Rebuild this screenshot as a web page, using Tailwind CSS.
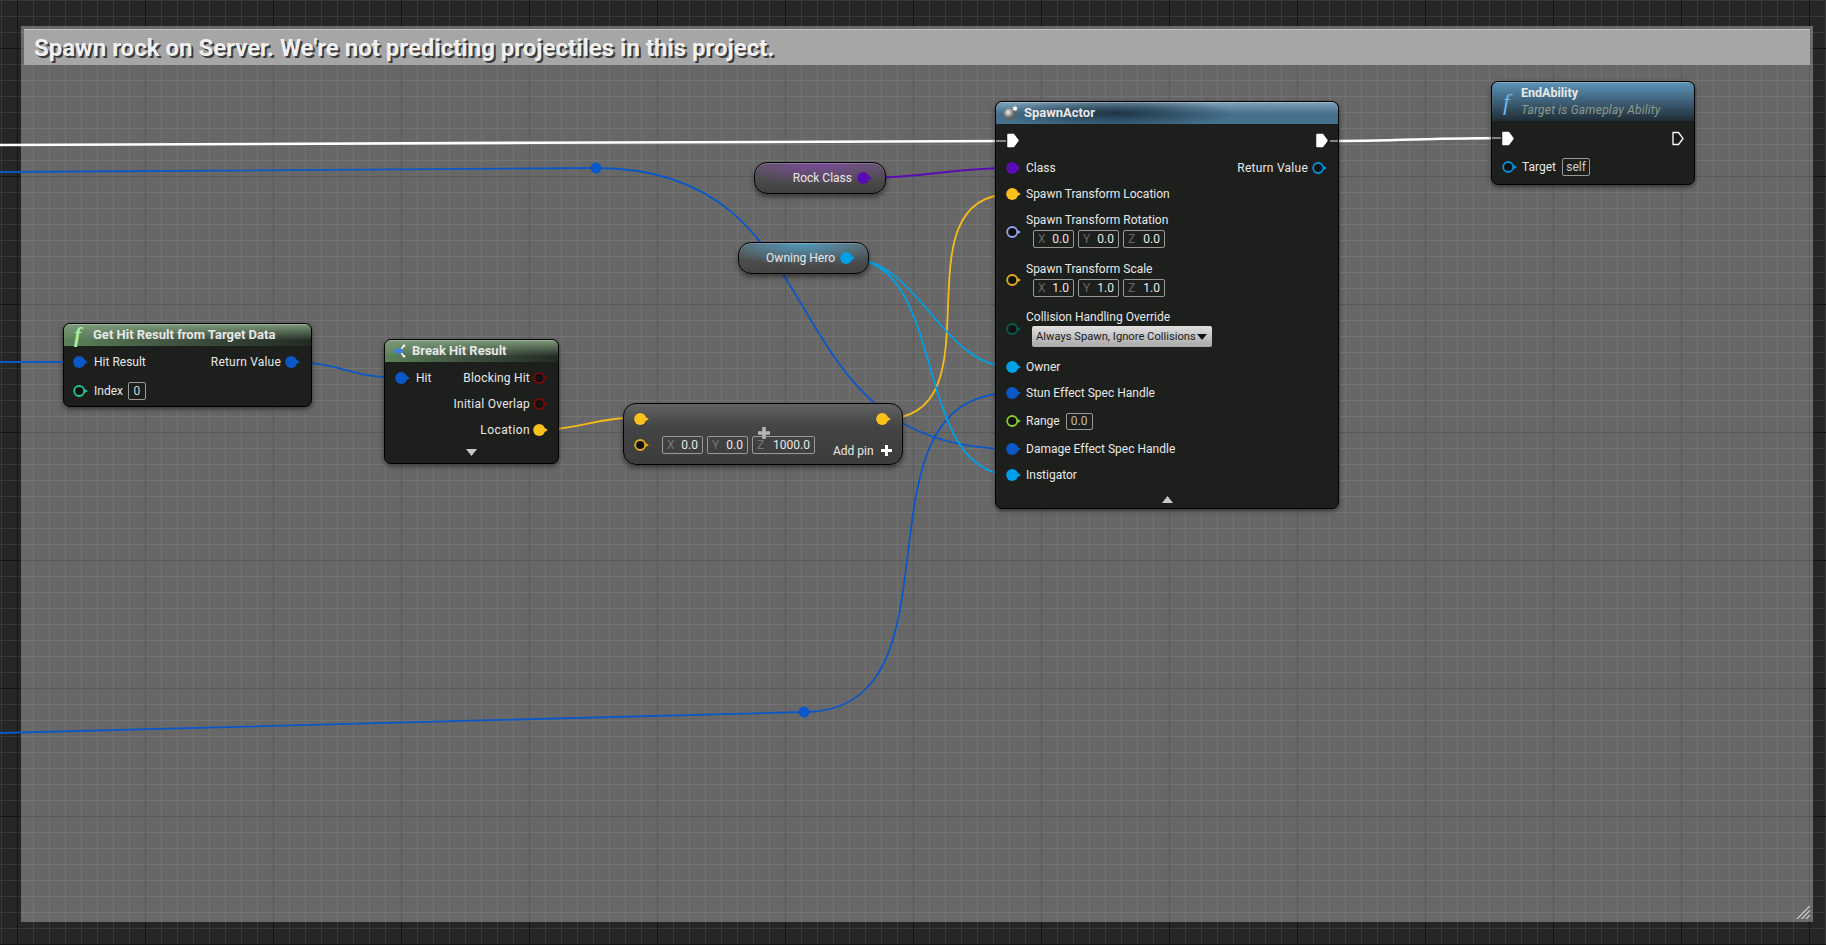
<!DOCTYPE html>
<html lang="en">
	<head>
		<meta charset="UTF-8" />
		<meta name="viewport" content="width=device-width, initial-scale=1.0" />
		<script src="https://cdn.jsdelivr.net/npm/@tailwindcss/browser@4"></script>
		<title>Blueprint graph</title>
	</head>

	<body class="m-0 p-0 overflow-hidden bg-[#262626] font-['Roboto',sans-serif] text-[12px] leading-none text-[#e8e8e8]">
		<!-- pin shapes -->
		<svg class="hidden">
			<symbol id="pin" viewBox="0 0 15 14"><circle cx="6.200" cy="7" r="6" fill="currentColor" /><path d="M11.800 5 14.800 7l-3 2z" fill="currentColor" /></symbol>
			<symbol id="ring" viewBox="0 0 15 14"><circle cx="6.200" cy="7" r="5" fill="#111" stroke="currentColor" stroke-width="1.800" /><path d="M11.800 5 14.800 7l-3 2z" fill="currentColor" /></symbol>
			<symbol id="exec" viewBox="0 0 15 15"><path d="M2 1.500h5.500L12 7.500l-4.500 6H2z" fill="#fff" stroke="#fff" stroke-width="1.500" stroke-linejoin="round" /></symbol>
			<symbol id="exec-off" viewBox="0 0 15 15"><path d="M2 1.500h5.500L12 7.500l-4.500 6H2z" fill="#181a18" stroke="#fff" stroke-width="1.300" stroke-linejoin="round" /></symbol>
		</svg>

		<div class="relative w-full h-[945px] overflow-hidden bg-[#262626] bg-[linear-gradient(to_right,#141414_1px,transparent_1px),linear-gradient(to_bottom,#141414_1px,transparent_1px),linear-gradient(to_right,#383838_1px,transparent_1px),linear-gradient(to_bottom,#383838_1px,transparent_1px)] bg-[size:128px_128px,128px_128px,16px_16px,16px_16px] bg-[position:17px_0,0_48px,1px_0,0_0]">
			<!-- comment box -->
			<div class="absolute left-[21px] top-[26px] w-[1792px] h-[896px] p-[3px] bg-white/30 shadow-[inset_0_0_22px_rgba(255,255,255,0.05)]">
				<div class="flex items-center h-[36px] pl-[10px] bg-[#a6a6a6] border-t border-[#c4c4c4] text-[24px] font-bold text-[#f0f0f0] [text-shadow:2px_2px_0_#3a3a3a]">
					Spawn rock on Server. We're not predicting projectiles in this project.
				</div>
				<svg class="absolute right-[3px] bottom-[3px] w-[14px] h-[14px]" viewBox="0 0 14 14" stroke="#d0d0d0" stroke-width="1.200"><path d="M1 14 14 1M5.500 14 14 5.500M10 14l4-4" /></svg>
			</div>

			<!-- wires -->
			<svg class="absolute inset-0 w-full h-full" viewBox="0 0 1826 945" fill="none" stroke-width="1.800">
				<path d="M0 145C300 145 700 141 1012 141" stroke="#fff" stroke-width="2.600" />
				<path d="M1322 141C1400 141 1430 138 1508 138" stroke="#fff" stroke-width="2.600" />
				<path d="M0 172 596 168C846 168 762 449 1012 449" stroke="#0a58c8" />
				<circle cx="596" cy="168" r="5.500" fill="#0a58c8" />
				<path d="M0 733 804 712C974 712 842 393 1012 393" stroke="#0a58c8" />
				<circle cx="804" cy="712" r="5.500" fill="#0a58c8" />
				<path d="M0 362H79M291 362C340 362 350 378 401 378" stroke="#0a58c8" />
				<path d="M539 430C575 430 600 417 640 417" stroke="#f5b919" />
				<path d="M884 419C1004 419 892 194 1012 194" stroke="#f5b919" />
				<path d="M863 178C925 178 950 168 1012 168" stroke="#5a0cb4" />
				<path d="M847 258C920 258 940 367 1012 367" stroke="#00a0e8" />
				<path d="M847 258C950 258 910 475 1012 475" stroke="#00a0e8" />
			</svg>

			<!-- Get Hit Result from Target Data -->
			<div class="absolute left-[63px] top-[323px] w-[249px] h-[84px] flex flex-col rounded-[7px] border border-black bg-[#1d1f1c] shadow-[0_2px_5px_rgba(0,0,0,0.5)] overflow-hidden">
				<div class="flex items-center h-[22px] shrink-0 pl-[10px] pb-[1px] gap-[5px] text-[13px] font-bold shadow-[inset_0_1px_0_rgba(255,255,255,0.25)] bg-[linear-gradient(180deg,#7d9b7a_0%,rgba(125,155,122,0)_75%),linear-gradient(90deg,#5c8259_0%,#3f5340_45%,#232a24_100%)]">
					<span class="font-['Liberation_Serif',serif] italic text-[22px] text-[#a5eda0] w-[14px]">f</span>
					<span>Get Hit Result from Target Data</span>
				</div>
				<div class="flex items-center justify-between h-[30px] pl-[9px] pr-[11px] mt-[1px]">
					<div class="flex items-center gap-[6px]"><svg class="w-[15px] h-[14px] text-[#0a58c8]"><use href="#pin" /></svg>Hit Result</div>
					<div class="flex items-center gap-[4px] tracking-[0.2px]">Return Value<svg class="w-[15px] h-[14px] text-[#0a58c8]"><use href="#pin" /></svg></div>
				</div>
				<div class="flex items-center h-[28px] pl-[9px] gap-[6px]">
					<svg class="w-[15px] h-[14px] text-[#1fcc98]"><use href="#ring" /></svg>Index
					<span class="flex items-center justify-center w-[18px] h-[18px] ml-[-1px] border border-[#999] rounded-[2px] text-[#cfcfcf]">0</span>
				</div>
			</div>

			<!-- Break Hit Result -->
			<div class="absolute left-[384px] top-[339px] w-[175px] h-[125px] flex flex-col rounded-[7px] border border-black bg-[#1d1f1c] shadow-[0_2px_5px_rgba(0,0,0,0.5)] overflow-hidden">
				<div class="flex items-center h-[22px] shrink-0 pl-[9px] pb-[1px] gap-[6px] text-[13px] font-bold shadow-[inset_0_1px_0_rgba(255,255,255,0.25)] bg-[linear-gradient(180deg,#7d9b7a_0%,rgba(125,155,122,0)_75%),linear-gradient(90deg,#5c8259_0%,#3f5340_45%,#232a24_100%)]">
					<svg class="w-[12px] h-[14px]" viewBox="0 0 12 14"><path d="M10 1.500 7 5.500M10 12.500 7 8.500" stroke="#f4f4f4" stroke-width="1.500" fill="none" /><circle cx="10" cy="1.800" r="1.300" fill="#f4f4f4" /><circle cx="10" cy="12.200" r="1.300" fill="#f4f4f4" /><rect x="0" y="4.800" width="9.500" height="4.500" rx="2.200" fill="#3f7fe0" /></svg>
					<span>Break Hit Result</span>
				</div>
				<div class="flex items-center justify-between h-[26px] mt-[3px] pl-[10px] pr-[10px]">
					<div class="flex items-center gap-[6px]"><svg class="w-[15px] h-[14px] text-[#0a58c8]"><use href="#pin" /></svg>Hit</div>
					<div class="flex items-center gap-[3px] tracking-[0.2px]">Blocking Hit<svg class="w-[15px] h-[14px] text-[#7a0606]"><use href="#ring" /></svg></div>
				</div>
				<div class="flex items-center justify-end gap-[3px] h-[26px] pr-[10px] tracking-[0.25px]">Initial Overlap<svg class="w-[15px] h-[14px] text-[#7a0606]"><use href="#ring" /></svg></div>
				<div class="flex items-center justify-end gap-[3px] h-[26px] pr-[10px] tracking-[0.4px]">Location<svg class="w-[15px] h-[14px] text-[#fbc21c]"><use href="#pin" /></svg></div>
				<div class="flex justify-center pt-[6px]"><svg class="w-[11px] h-[7px]" viewBox="0 0 11 7"><path d="M0 0h11L5.500 7z" fill="#c8c8c8" /></svg></div>
			</div>

			<!-- Make vector -->
			<div class="absolute left-[623px] top-[403px] w-[280px] h-[62px] flex flex-col rounded-[13px] border border-black bg-[linear-gradient(180deg,#626262_0%,#444_38%,#3c3c3c_100%)] shadow-[0_3px_5px_rgba(0,0,0,0.45)]">
				<div class="flex items-center justify-between h-[28px] pl-[10px] pr-[11px] pt-[1px]">
					<svg class="w-[15px] h-[14px] text-[#fbc21c]"><use href="#pin" /></svg>
					<svg class="w-[15px] h-[14px] text-[#fbc21c]"><use href="#pin" /></svg>
				</div>
				<div class="flex items-center h-[26px] pl-[10px]">
					<svg class="w-[15px] h-[14px] text-[#e5ae1c] mr-[13px]"><use href="#ring" /></svg>
					<span class="flex justify-between items-center w-[41px] h-[18px] px-[4px] mr-[4px] border border-[#999] rounded-[2px]"><span class="text-[#777]">X</span>0.0</span>
					<span class="flex justify-between items-center w-[41px] h-[18px] px-[4px] mr-[4px] border border-[#999] rounded-[2px]"><span class="text-[#777]">Y</span>0.0</span>
					<span class="flex justify-between items-center w-[63px] h-[18px] px-[4px] border border-[#999] rounded-[2px]"><span class="text-[#777]">Z</span>1000.0</span>
					<span class="ml-[18px] mt-[11px]">Add pin</span>
					<svg class="ml-[7px] mt-[10px] w-[11px] h-[11px]" viewBox="0 0 11 11"><path d="M5.500 0v11M0 5.500h11" stroke="#fff" stroke-width="3" /></svg>
				</div>
				<svg class="absolute left-[134px] top-[23px] w-[12px] h-[12px]" viewBox="0 0 12 12"><path d="M6 0v12M0 6h12" stroke="#b5b5b5" stroke-width="3.500" /></svg>
			</div>

			<!-- variable getters -->
			<div class="absolute left-[754px] top-[162px] w-[132px] h-[32px] flex items-center justify-end gap-[5px] pr-[13px] rounded-[13px] border border-black bg-[radial-gradient(ellipse_70%_75%_at_50%_0%,rgba(130,70,170,0.8),transparent),linear-gradient(180deg,#5a5a5a,#3f3f3f)] shadow-[inset_0_1px_0_rgba(255,255,255,0.2),0_3px_5px_rgba(0,0,0,0.45)]">
				Rock Class<svg class="w-[15px] h-[14px] text-[#5a0cb4]"><use href="#pin" /></svg>
			</div>
			<div class="absolute left-[738px] top-[242px] w-[131px] h-[32px] flex items-center justify-end gap-[5px] pr-[13px] rounded-[13px] border border-black bg-[radial-gradient(ellipse_70%_75%_at_50%_0%,rgba(80,170,215,0.8),transparent),linear-gradient(180deg,rgba(90,90,90,0.9),rgba(63,63,63,0.9))] shadow-[inset_0_1px_0_rgba(255,255,255,0.2),0_3px_5px_rgba(0,0,0,0.45)]">
				Owning Hero<svg class="w-[15px] h-[14px] text-[#00a0e8]"><use href="#pin" /></svg>
			</div>

			<!-- SpawnActor -->
			<div class="absolute left-[995px] top-[101px] w-[344px] h-[408px] flex flex-col rounded-[7px] border border-black bg-[#1d1f1c] shadow-[0_2px_5px_rgba(0,0,0,0.5)] overflow-hidden">
				<div class="flex items-center h-[22px] shrink-0 pl-[7px] pb-[1px] gap-[6px] text-[13px] font-bold shadow-[inset_0_1px_0_rgba(255,255,255,0.25)] bg-[radial-gradient(ellipse_35%_70%_at_35%_50%,rgba(25,45,60,0.9),transparent),linear-gradient(180deg,#7fa3ba,#46708c_55%,#44708c)]">
					<svg class="w-[15px] h-[15px]" viewBox="0 0 15 15"><defs><radialGradient id="bomb" cx="35%" cy="35%"><stop offset="0" stop-color="#eee" /><stop offset="1" stop-color="#5f5f5f" /></radialGradient></defs><circle cx="7" cy="9" r="6" fill="url(#bomb)" /><path d="m12 .3.7 2 2-.4-1.200 1.800 1.200 1.600-2-.3-.7 1.800-.7-1.800-2 .3 1.200-1.600-1.200-1.800 2 .4z" fill="#fff" /></svg>
					<span>SpawnActor</span>
				</div>
				<div class="flex items-center justify-between h-[31px] pt-[1px] pl-[10px] pr-[8px] shrink-0">
					<svg class="w-[15px] h-[15px]"><use href="#exec" /></svg>
					<svg class="w-[15px] h-[15px]"><use href="#exec" /></svg>
				</div>
				<div class="flex items-center justify-between h-[26px] shrink-0 pl-[10px] pr-[11px]">
					<div class="flex items-center gap-[5px]"><svg class="w-[15px] h-[14px] text-[#5a0cb4]"><use href="#pin" /></svg>Class</div>
					<div class="flex items-center gap-[4px] tracking-[0.25px]">Return Value<svg class="w-[15px] h-[14px] text-[#0090e0]"><use href="#ring" /></svg></div>
				</div>
				<div class="flex items-center gap-[5px] h-[26px] shrink-0 pl-[10px]"><svg class="w-[15px] h-[14px] text-[#fbc21c]"><use href="#pin" /></svg>Spawn Transform Location</div>
				<div class="flex items-center gap-[5px] h-[49px] shrink-0 pl-[10px]">
					<svg class="w-[15px] h-[14px] text-[#93a5f0]"><use href="#ring" /></svg>
					<div class="flex flex-col gap-[4px] mb-[2px]">
						<span>Spawn Transform Rotation</span>
						<div class="flex gap-[4px] ml-[7px]">
							<span class="flex justify-between items-center w-[41px] h-[18px] px-[4px] border border-[#999] rounded-[2px]"><span class="text-[#666]">X</span>0.0</span>
							<span class="flex justify-between items-center w-[41px] h-[18px] px-[4px] border border-[#999] rounded-[2px]"><span class="text-[#666]">Y</span>0.0</span>
							<span class="flex justify-between items-center w-[42px] h-[18px] px-[4px] border border-[#999] rounded-[2px]"><span class="text-[#666]">Z</span>0.0</span>
						</div>
					</div>
				</div>
				<div class="flex items-center gap-[5px] h-[48px] shrink-0 pl-[10px]">
					<svg class="w-[15px] h-[14px] text-[#e5ae1c]"><use href="#ring" /></svg>
					<div class="flex flex-col gap-[4px]">
						<span>Spawn Transform Scale</span>
						<div class="flex gap-[4px] ml-[7px]">
							<span class="flex justify-between items-center w-[41px] h-[18px] px-[4px] border border-[#999] rounded-[2px]"><span class="text-[#666]">X</span>1.0</span>
							<span class="flex justify-between items-center w-[41px] h-[18px] px-[4px] border border-[#999] rounded-[2px]"><span class="text-[#666]">Y</span>1.0</span>
							<span class="flex justify-between items-center w-[42px] h-[18px] px-[4px] border border-[#999] rounded-[2px]"><span class="text-[#666]">Z</span>1.0</span>
						</div>
					</div>
				</div>
				<div class="flex items-center gap-[5px] h-[50px] shrink-0 pl-[10px]">
					<svg class="w-[15px] h-[14px] text-[#0a5a50]"><use href="#ring" /></svg>
					<div class="flex flex-col gap-[3px]">
						<span>Collision Handling Override</span>
						<div class="flex items-center justify-between w-[180px] h-[21px] ml-[6px] pl-[4px] pr-[5px] rounded-[2px] whitespace-nowrap text-[11.200px] text-[#1a1a1a] bg-[linear-gradient(180deg,#e0e0e0,#a8a8a8)]">
							Always Spawn, Ignore Collisions
							<svg class="w-[10px] h-[6px] shrink-0" viewBox="0 0 10 6"><path d="M0 0h10L5 6z" fill="#111" /></svg>
						</div>
					</div>
				</div>
				<div class="flex items-center gap-[5px] h-[26px] shrink-0 pl-[10px]"><svg class="w-[15px] h-[14px] text-[#00a0e8]"><use href="#pin" /></svg>Owner</div>
				<div class="flex items-center gap-[5px] h-[26px] shrink-0 pl-[10px]"><svg class="w-[15px] h-[14px] text-[#0a58c8]"><use href="#pin" /></svg>Stun Effect Spec Handle</div>
				<div class="flex items-center gap-[5px] h-[30px] shrink-0 pl-[10px]">
					<svg class="w-[15px] h-[14px] text-[#8ecb2f]"><use href="#ring" /></svg>Range
					<span class="flex items-center justify-center w-[27px] h-[17px] ml-[1px] border border-[#999] rounded-[2px] text-[#bbb]">0.0</span>
				</div>
				<div class="flex items-center gap-[5px] h-[26px] shrink-0 pl-[10px]"><svg class="w-[15px] h-[14px] text-[#0a58c8]"><use href="#pin" /></svg>Damage Effect Spec Handle</div>
				<div class="flex items-center gap-[5px] h-[26px] shrink-0 pl-[10px]"><svg class="w-[15px] h-[14px] text-[#00a0e8]"><use href="#pin" /></svg>Instigator</div>
				<div class="flex justify-center pt-[8px]"><svg class="w-[11px] h-[7px]" viewBox="0 0 11 7"><path d="M0 7h11L5.500 0z" fill="#c8c8c8" /></svg></div>
			</div>

			<!-- EndAbility -->
			<div class="absolute left-[1491px] top-[81px] w-[204px] h-[104px] flex flex-col rounded-[7px] border border-black bg-[#1d1f1c] shadow-[0_2px_5px_rgba(0,0,0,0.5)] overflow-hidden">
				<div class="flex items-center h-[39px] shrink-0 pl-[11px] gap-[4px] shadow-[inset_0_1px_0_rgba(255,255,255,0.25)] bg-[linear-gradient(180deg,#5d94ba,#1f2c35)]">
					<span class="font-['Liberation_Serif',serif] italic text-[24px] text-[#6ab6ee] w-[14px]">f</span>
					<div class="flex flex-col gap-[5px]">
						<span class="font-bold text-[12.500px]">EndAbility</span>
						<span class="italic text-[#8c9a8c] tracking-[0.2px]">Target is Gameplay Ability</span>
					</div>
				</div>
				<div class="flex items-center justify-between h-[34px] pl-[9px] pr-[8px]">
					<svg class="w-[15px] h-[15px]"><use href="#exec" /></svg>
					<svg class="w-[15px] h-[15px]"><use href="#exec-off" /></svg>
				</div>
				<div class="flex items-center gap-[5px] h-[24px] pl-[10px]">
					<svg class="w-[15px] h-[14px] text-[#0090e0]"><use href="#ring" /></svg>Target
					<span class="flex items-center justify-center w-[28px] h-[18px] ml-[1px] border border-[#999] rounded-[2px] text-[#cfcfcf]">self</span>
				</div>
			</div>

			<!-- wire stubs fading over the node bodies -->
			<svg class="absolute inset-0 w-full h-full pointer-events-none" viewBox="0 0 1826 945" fill="none" stroke="#fff" stroke-width="2" stroke-opacity="0.45">
				<path d="M996 141H1006M1330 141H1338M1492 138H1501" />
			</svg>
		</div>
	</body>
</html>
